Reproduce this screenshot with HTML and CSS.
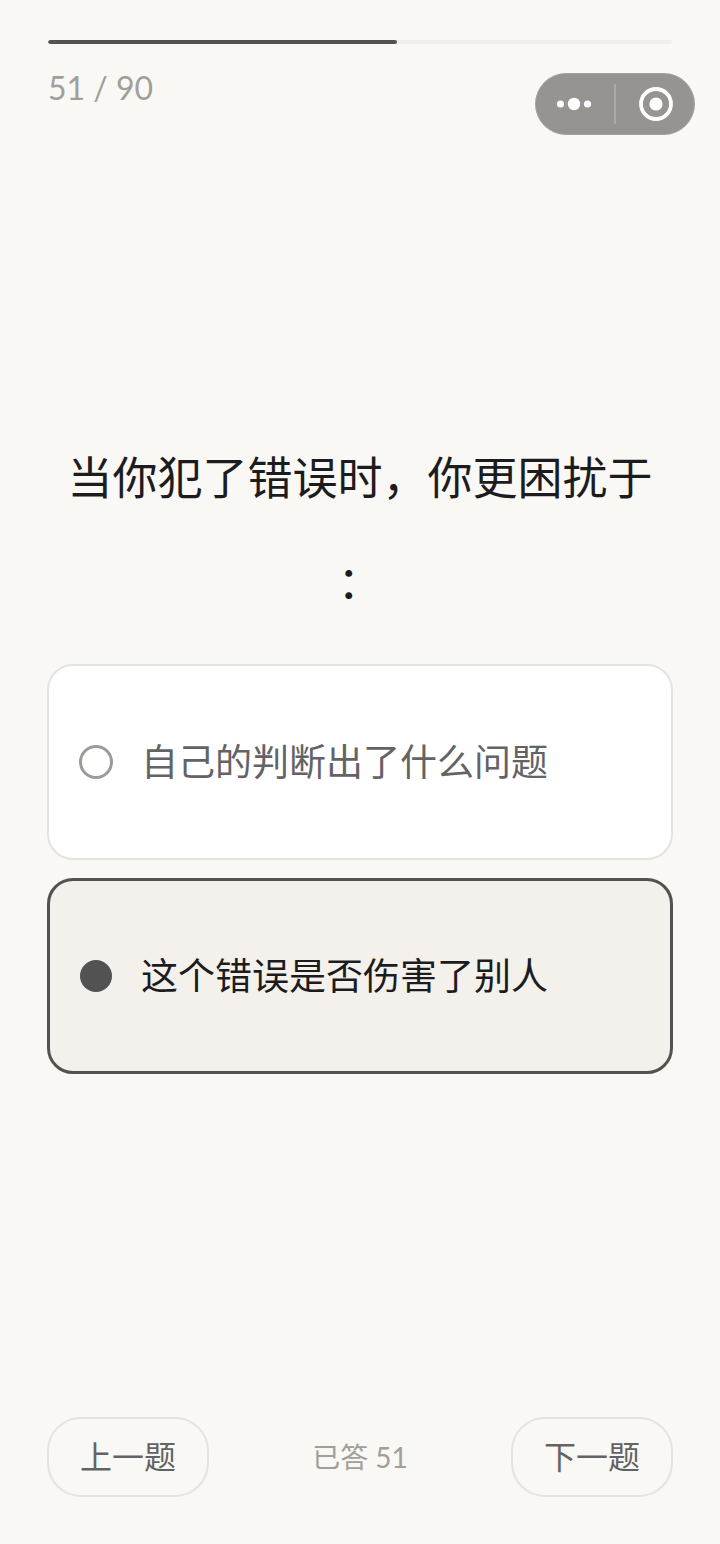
FILE: index.html
```
<!DOCTYPE html>
<html lang="zh-CN">
<head>
    <meta charset="UTF-8">
    <meta name="viewport" content="width=device-width, initial-scale=1.0">
    <title>51 / 90</title>
    <link rel="stylesheet" href="styles.css">
</head>
<body>
    <div class="capsule">
        <button type="button" class="capsule-btn" aria-label="更多">
            <svg width="36" height="36" viewBox="0 0 36 36" fill="#fff">
                <circle cx="4.5" cy="18" r="3.6"/>
                <circle cx="18" cy="18" r="6.2"/>
                <circle cx="31.5" cy="18" r="3.6"/>
            </svg>
        </button>
        <span class="capsule-line"></span>
        <button type="button" class="capsule-btn" aria-label="关闭">
            <svg width="36" height="36" viewBox="0 0 36 36">
                <circle cx="18" cy="18" r="15" fill="none" stroke="#fff" stroke-width="3.8"/>
                <circle cx="18" cy="18" r="6.6" fill="#fff"/>
            </svg>
        </button>
    </div>

    <form class="quiz">
        <header class="header">
            <div class="progress">
                <div class="progress-bar" style="width: 56%"></div>
            </div>
            <p class="count">51 / 90</p>
        </header>

        <main class="content">
            <h1 class="question" id="question">当你犯了错误时，你更困扰于：</h1>
            <div class="options" role="radiogroup" aria-labelledby="question">
                <label class="option" for="optionA">
                    <input type="radio" name="answer" id="optionA" value="a">
                    <span>自己的判断出了什么问题</span>
                </label>
                <label class="option" for="optionB">
                    <input type="radio" name="answer" id="optionB" value="b" checked>
                    <span>这个错误是否伤害了别人</span>
                </label>
            </div>
        </main>

        <footer class="footer">
            <button type="button" class="nav-btn">上一题</button>
            <span class="answered">已答 51</span>
            <button type="button" class="nav-btn">下一题</button>
        </footer>
    </form>
</body>
</html>
```
FILE: styles.css
```
* {
    margin: 0;
    padding: 0;
    box-sizing: border-box;
}

body {
    background: #f9f8f4;
    color: #1c1c1e;
    font-family: Lato, "Noto Sans CJK SC", sans-serif;
}

button {
    font-family: inherit;
    border: none;
    background: none;
    cursor: pointer;
}

.quiz {
    display: flex;
    flex-direction: column;
    min-height: 100vh;
    padding: 40px 47px 47px;
}

/* Progress */
.header {
    padding: 0 1px;
}

.progress {
    height: 4px;
    border-radius: 2px;
    background: #efeeea;
    overflow: hidden;
}

.progress-bar {
    height: 100%;
    border-radius: 2px;
    background: #525252;
}

.count {
    margin-top: 24px;
    font-size: 32px;
    line-height: 40px;
    color: #a09f9b;
}

/* Floating menu */
.capsule {
    position: absolute;
    top: 73px;
    right: 25px;
    display: flex;
    align-items: center;
    justify-content: space-between;
    width: 160px;
    height: 62px;
    padding: 0 20px;
    border: 1px solid #a5a4a1;
    border-radius: 31px;
    background: #959491;
}

.capsule-btn {
    display: flex;
    align-items: center;
    height: 100%;
}

.capsule-line {
    width: 2px;
    height: 40px;
    background: #aaa9a7;
}

/* Question */
.content {
    flex: 1;
    display: flex;
    flex-direction: column;
    justify-content: center;
    padding-bottom: 26px;
}

.question {
    font-size: 45px;
    font-weight: 400;
    line-height: 104px;
    text-align: center;
    line-break: anywhere;
}

.options {
    display: flex;
    flex-direction: column;
    gap: 18px;
    margin-top: 30px;
}

.option {
    display: flex;
    align-items: center;
    gap: 28px;
    min-height: 196px;
    padding: 30px;
    border: 2px solid #e4e3df;
    border-radius: 26px;
    background: #fff;
    color: #636366;
    font-size: 37px;
    line-height: 56px;
    cursor: pointer;
}

.option input {
    appearance: none;
    flex: none;
    width: 34px;
    height: 34px;
    border: 3px solid #9c9b97;
    border-radius: 50%;
}

.option:has(input:checked) {
    padding: 29px;
    border: 3px solid #525252;
    background: #f4f1ed;
    color: #1c1c1e;
}

.option input:checked {
    border: 1px solid transparent;
    background: #525252;
    background-clip: padding-box;
}

/* Bottom navigation */
.footer {
    display: flex;
    align-items: center;
    justify-content: space-between;
}

.nav-btn {
    height: 80px;
    padding: 0 31px;
    border: 2px solid #e4e3df;
    border-radius: 34px;
    color: #636366;
    font-size: 32px;
    line-height: 44px;
}

.answered {
    font-size: 28px;
    line-height: 44px;
    color: #a09f9b;
}
```
